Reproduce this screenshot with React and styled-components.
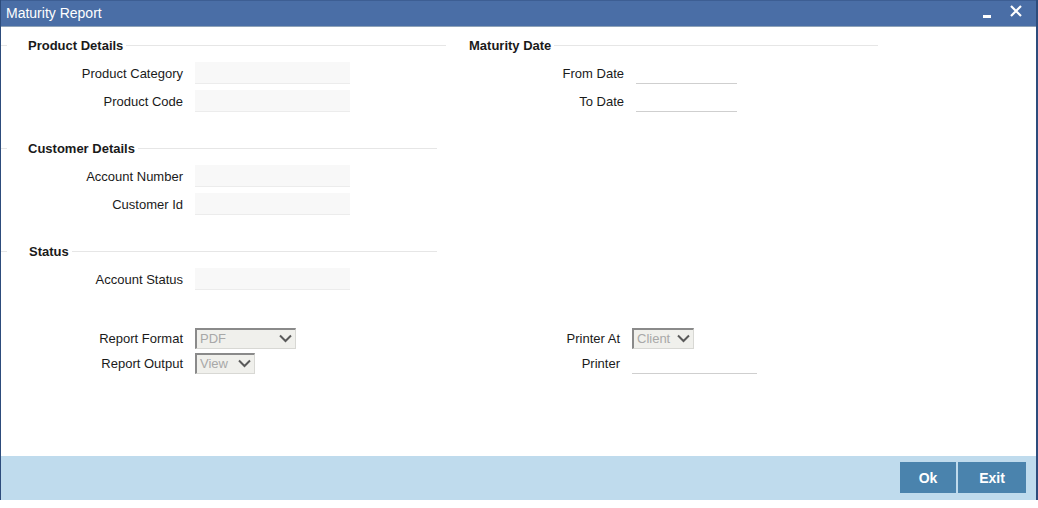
import React from "react";
import styled, { createGlobalStyle } from "styled-components";

const GlobalStyle = createGlobalStyle`
  html, body {
    margin: 0;
    padding: 0;
    background: #fff;
    font-family: "Liberation Sans", Arial, sans-serif;
    font-size: 13px;
    color: #1a1a1a;
  }
`;

const Chevron = () => (
  <svg width="13" height="9" viewBox="0 0 13 9">
    <path d="M1 1.5 L6.5 7 L12 1.5" fill="none" stroke="#5a5a5a" strokeWidth="2" />
  </svg>
);

const Select = ({ value, width }) => (
  <SelectBox $width={width}>
    <span>{value}</span>
    <Chevron />
  </SelectBox>
);

const Field = ({ label, type }) => (
  <Row>
    <Label>{label}</Label>
    {type === "date" ? <LineInput $width={101} /> : <TextInput />}
  </Row>
);

export default function App() {
  return (
    <>
      <GlobalStyle />
      <Window>
        <TitleBar>
          <Title>Maturity Report</Title>
          <TitleButtons>
            <Minimize />
            <CloseIcon width="12" height="12" viewBox="0 0 12 12">
              <path d="M1 1 L11 11 M11 1 L1 11" stroke="#fff" strokeWidth="2.2" />
            </CloseIcon>
          </TitleButtons>
        </TitleBar>
        <Body>
          <TopGrid>
            <Column>
              <Section>
                <Header $lead>Product Details</Header>
                <Rows>
                  <Field label="Product Category" />
                  <Field label="Product Code" />
                </Rows>
              </Section>
              <Section $gap>
                <Header $lead $short>Customer Details</Header>
                <Rows>
                  <Field label="Account Number" />
                  <Field label="Customer Id" />
                </Rows>
              </Section>
              <Section $gap>
                <Header $lead $short $nudge>Status</Header>
                <Rows>
                  <Field label="Account Status" />
                </Rows>
              </Section>
            </Column>
            <Column>
              <Section>
                <Header $inset>Maturity Date</Header>
                <Rows $right>
                  <Field label="From Date" type="date" />
                  <Field label="To Date" type="date" />
                </Rows>
              </Section>
            </Column>
          </TopGrid>
          <ReportGrid>
            <ReportRows>
              <ReportRow>
                <Label>Report Format</Label>
                <Select value="PDF" width={101} />
              </ReportRow>
              <ReportRow>
                <Label>Report Output</Label>
                <Select value="View" width={60} />
              </ReportRow>
            </ReportRows>
            <ReportRows>
              <ReportRow $right>
                <Label>Printer At</Label>
                <Select value="Client" width={62} />
              </ReportRow>
              <ReportRow $right>
                <Label>Printer</Label>
                <LineInput $width={125} />
              </ReportRow>
            </ReportRows>
          </ReportGrid>
        </Body>
        <Footer>
          <Button $width={56}>Ok</Button>
          <Button $width={68}>Exit</Button>
        </Footer>
      </Window>
    </>
  );
}

const Window = styled.div`
  width: 1038px;
  height: 500px;
  box-sizing: border-box;
  border-left: 1px solid #2d4c7c;
  border-right: 2px solid #2d4c7c;
  display: flex;
  flex-direction: column;
  background: #fff;
`;

const TitleBar = styled.div`
  height: 27px;
  flex: none;
  background: #4a6ea6;
  border-top: 1px solid #3d5e93;
  border-bottom: 1px solid #8fa3b8;
  box-sizing: border-box;
  display: flex;
  align-items: center;
  justify-content: space-between;
  padding: 0 14px 1px 5px;
`;

const Title = styled.div`
  color: #fff;
  font-size: 14px;
  line-height: 16px;
`;

const TitleButtons = styled.div`
  display: flex;
  align-items: center;
  gap: 19px;
`;

const CloseIcon = styled.svg`
  margin-top: -4px;
`;

const Minimize = styled.div`
  width: 8px;
  height: 3px;
  background: #fff;
  margin-top: 6px;
`;

const Body = styled.div`
  flex: 1;
  display: flex;
  flex-direction: column;
  padding-top: 10px;
`;

const TopGrid = styled.div`
  display: grid;
  grid-template-columns: 445px 432px;
  align-items: start;
`;

const Column = styled.div`
  display: flex;
  flex-direction: column;
`;

const Section = styled.div`
  display: flex;
  flex-direction: column;
  gap: 9px;
  margin-top: ${(p) => (p.$gap ? "28px" : "0")};
`;

const Header = styled.div`
  display: flex;
  align-items: center;
  height: 16px;
  font-weight: bold;
  padding-left: ${(p) => (p.$inset ? "23px" : "0")};
  padding-right: ${(p) => (p.$short ? "9px" : "0")};
  &::before {
    content: "";
    display: ${(p) => (p.$lead ? "block" : "none")};
    width: 6px;
    height: 1px;
    background: #e6e6e6;
    margin-right: ${(p) => (p.$nudge ? "22px" : "21px")};
  }
  &::after {
    content: "";
    flex: 1;
    height: 1px;
    background: #e6e6e6;
    margin-left: 3px;
  }
`;

const Rows = styled.div`
  display: flex;
  flex-direction: column;
  gap: 6px;
  ${(p) => p.$right && "& > div { grid-template-columns: 178px auto; }"}
`;

const Row = styled.div`
  display: grid;
  grid-template-columns: 182px auto;
  column-gap: 12px;
  align-items: center;
  height: 22px;
`;

const Label = styled.div`
  text-align: right;
  font-size: 13px;
  white-space: nowrap;
`;

const TextInput = styled.div`
  width: 155px;
  height: 22px;
  box-sizing: border-box;
  background: #f8f8f8;
  border-bottom: 1px solid #ececec;
`;

const LineInput = styled.div`
  width: ${(p) => p.$width}px;
  height: 22px;
  box-sizing: border-box;
  border-bottom: 1px solid #cfcfcf;
  align-self: start;
`;

const ReportGrid = styled.div`
  display: grid;
  grid-template-columns: 445px auto;
  margin-top: 37px;
`;

const ReportRows = styled.div`
  display: flex;
  flex-direction: column;
  gap: 3px;
`;

const ReportRow = styled.div`
  display: grid;
  grid-template-columns: ${(p) => (p.$right ? "174px" : "182px")} auto;
  column-gap: 12px;
  align-items: center;
  height: 22px;
`;

const SelectBox = styled.div`
  width: ${(p) => p.$width}px;
  height: 21px;
  box-sizing: border-box;
  background: #f0f0ec;
  border-top: 2px solid #8a8a8a;
  border-left: 2px solid #8a8a8a;
  border-right: 1px solid #d8d8d4;
  border-bottom: 1px solid #d8d8d4;
  display: flex;
  align-items: center;
  justify-content: space-between;
  padding: 0 3px 0 3px;
  color: #a8a8a8;
  font-size: 13px;
`;

const Footer = styled.div`
  height: 44px;
  flex: none;
  background: #bfdbed;
  display: flex;
  justify-content: flex-end;
  align-items: flex-start;
  gap: 2px;
  padding: 6px 10px 0 0;
  box-sizing: border-box;
`;

const Button = styled.div`
  width: ${(p) => p.$width}px;
  height: 31px;
  background: #4a83ad;
  color: #fff;
  font-weight: bold;
  font-size: 14px;
  display: flex;
  align-items: center;
  justify-content: center;
`;
